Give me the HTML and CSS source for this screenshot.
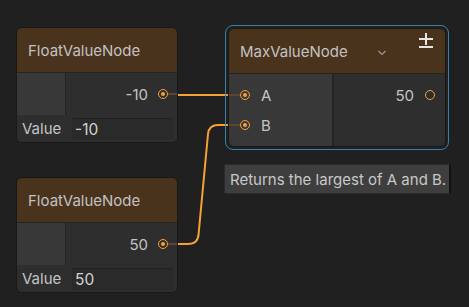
FILE: index.html
```html
<!DOCTYPE html>
<html>
<head>
<meta charset="utf-8">
<link rel="stylesheet" href="styles.css">
</head>
<body>
<div class="canvas">
  <svg class="edges" width="469" height="307" viewBox="0 0 469 307">
    <path d="M177,95 L229,95" />
    <path d="M177,244 L188,244 Q198,244 198.6,234 L208,134 Q209,125 218,125 L229,125" />
  </svg>

  <div class="node float n1">
    <div class="header"><span class="title">FloatValueNode</span></div>
    <div class="body">
      <div class="swatch"></div>
      <div class="outputs">
        <span class="val">-10</span>
        <span class="port filled"></span>
        <span class="stub"></span>
      </div>
    </div>
    <div class="field-row">
      <span class="label">Value</span>
      <span class="field">-10</span>
    </div>
  </div>

  <div class="node float n2">
    <div class="header"><span class="title">FloatValueNode</span></div>
    <div class="body">
      <div class="swatch"></div>
      <div class="outputs">
        <span class="val">50</span>
        <span class="port filled"></span>
        <span class="stub"></span>
      </div>
    </div>
    <div class="field-row">
      <span class="label">Value</span>
      <span class="field">50</span>
    </div>
  </div>

  <div class="selection">
    <div class="node max">
      <div class="header">
        <span class="title">MaxValueNode</span>
        <svg class="chev" width="10" height="6" viewBox="0 0 10 6"><path d="M1.5,1 L5,4.5 L8.5,1"/></svg>
        <svg class="pm" width="14" height="15" viewBox="0 0 14 15">
          <rect x="0" y="5" width="14" height="2"/>
          <rect x="6" y="0" width="2" height="12"/>
          <rect x="0" y="13" width="14" height="2"/>
        </svg>
      </div>
      <div class="body">
        <div class="inputs">
          <div class="in-row"><span class="stub left"></span><span class="port filled"></span><span class="pname">A</span></div>
          <div class="in-row"><span class="stub left"></span><span class="port filled"></span><span class="pname">B</span></div>
        </div>
        <div class="outs">
          <div class="out-row"><span class="val">50</span><span class="port hollow"></span></div>
        </div>
      </div>
    </div>
  </div>

  <div class="tooltip">Returns the largest of A and B.</div>
</div>
</body>
</html>
```

FILE: styles.css
```css
html, body {
  margin: 0;
  padding: 0;
  background: #202020;
}
.canvas {
  position: relative;
  width: 469px;
  height: 307px;
  overflow: hidden;
  background: #202020;
  font-family: Inter, "Noto Sans", sans-serif;
  font-size: 15px;
  color: #c4c4c4;
}
.edges {
  position: absolute;
  left: 0;
  top: 0;
}
.edges path {
  fill: none;
  stroke: #f7a037;
  stroke-width: 2;
}
.node {
  position: absolute;
  border: 1px solid #191919;
  border-radius: 6px;
  overflow: hidden;
  background: #2e2e2e;
  box-sizing: border-box;
}
.float {
  width: 162px;
  height: 116px;
  display: flex;
  flex-direction: column;
}
.n1 { left: 16px; top: 27px; }
.n2 { left: 16px; top: 177px; }
.header {
  height: 45px;
  flex: none;
  background: #4a331d;
  display: flex;
  align-items: center;
  padding-left: 11px;
  border-bottom: 1px solid #242424;
  box-sizing: border-box;
}
.title {
  color: #c2c2c2;
  font-size: 15px;
}
.body {
  display: flex;
  height: 42px;
  flex: none;
  background: #252525;
  gap: 1px;
}
.swatch {
  width: 48px;
  background: #383838;
}
.outputs {
  flex: 1;
  position: relative;
  background: #2e2e2e;
  display: flex;
  align-items: center;
  justify-content: flex-end;
  padding-right: 9px;
}
.val {
  margin-right: 10px;
  color: #c4c4c4;
}
.port {
  width: 8px;
  height: 8px;
  border-radius: 50%;
  border: 1px solid #f7a037;
  box-sizing: content-box;
  position: relative;
  z-index: 1;
  background: #2e2e2e;
}
.port.filled::after {
  content: "";
  position: absolute;
  left: 2px;
  top: 2px;
  width: 4px;
  height: 4px;
  border-radius: 50%;
  background: #f7a037;
}
.stub {
  position: absolute;
  right: 0;
  top: 50%;
  width: 9px;
  height: 2px;
  margin-top: -1px;
  background: #5b4530;
}
.field-row {
  flex: 1;
  display: flex;
  align-items: center;
  padding: 0 4px 0 5px;
  background: #2e2e2e;
}
.label {
  width: 50px;
  color: #c4c4c4;
  font-size: 15px;
}
.field {
  flex: 1;
  height: 22px;
  margin-top: 1px;
  background: #2a2a2a;
  border-top: 1px solid #212121;
  border-radius: 3px;
  box-sizing: border-box;
  padding-left: 3px;
  display: flex;
  align-items: center;
  color: #d2d2d2;
  font-size: 15.5px;
}
.selection {
  position: absolute;
  left: 225px;
  top: 25px;
  width: 224px;
  height: 125px;
  border: 1px solid #3a7fa8;
  border-radius: 8px;
  box-sizing: border-box;
  padding: 2px;
}
.max {
  position: static;
  width: 100%;
  height: 100%;
  display: flex;
  flex-direction: column;
}
.max .header {
  padding-right: 12px;
}
.max .title {
  flex: 1;
}
.chev {
  margin-right: 32px;
  margin-top: 4px;
}
.chev path {
  fill: none;
  stroke: #9a9a9a;
  stroke-width: 1.2;
}
.pm {
  align-self: flex-start;
  margin-top: 4px;
  fill: #e6e6e6;
}
.max .body {
  flex: 1;
  height: auto;
  gap: 2px;
  background: #252525;
}
.inputs {
  width: 103px;
  background: #383838;
  display: flex;
  flex-direction: column;
  padding-top: 6px;
}
.in-row {
  height: 30px;
  display: flex;
  align-items: center;
  position: relative;
  padding-left: 11px;
}
.stub.left {
  left: 0;
  right: auto;
  width: 13px;
}
.in-row .port {
  background: #383838;
}
.pname {
  margin-left: 11px;
  color: #c4c4c4;
  font-size: 15px;
}
.outs {
  flex: 1;
  background: #2e2e2e;
  padding-top: 6px;
}
.out-row {
  height: 30px;
  display: flex;
  align-items: center;
  justify-content: flex-end;
  padding-right: 10px;
}
.out-row .val {
  margin-right: 11px;
  font-size: 15px;
}
.tooltip {
  position: absolute;
  left: 224px;
  top: 164px;
  width: 227px;
  height: 30px;
  box-sizing: border-box;
  background: #3e3e3e;
  border: 1px solid #2a2a2a;
  border-right: 2px solid #111;
  display: flex;
  align-items: center;
  padding-left: 5px;
  color: #c8c8c8;
  font-size: 15px;
  white-space: nowrap;
}
```
